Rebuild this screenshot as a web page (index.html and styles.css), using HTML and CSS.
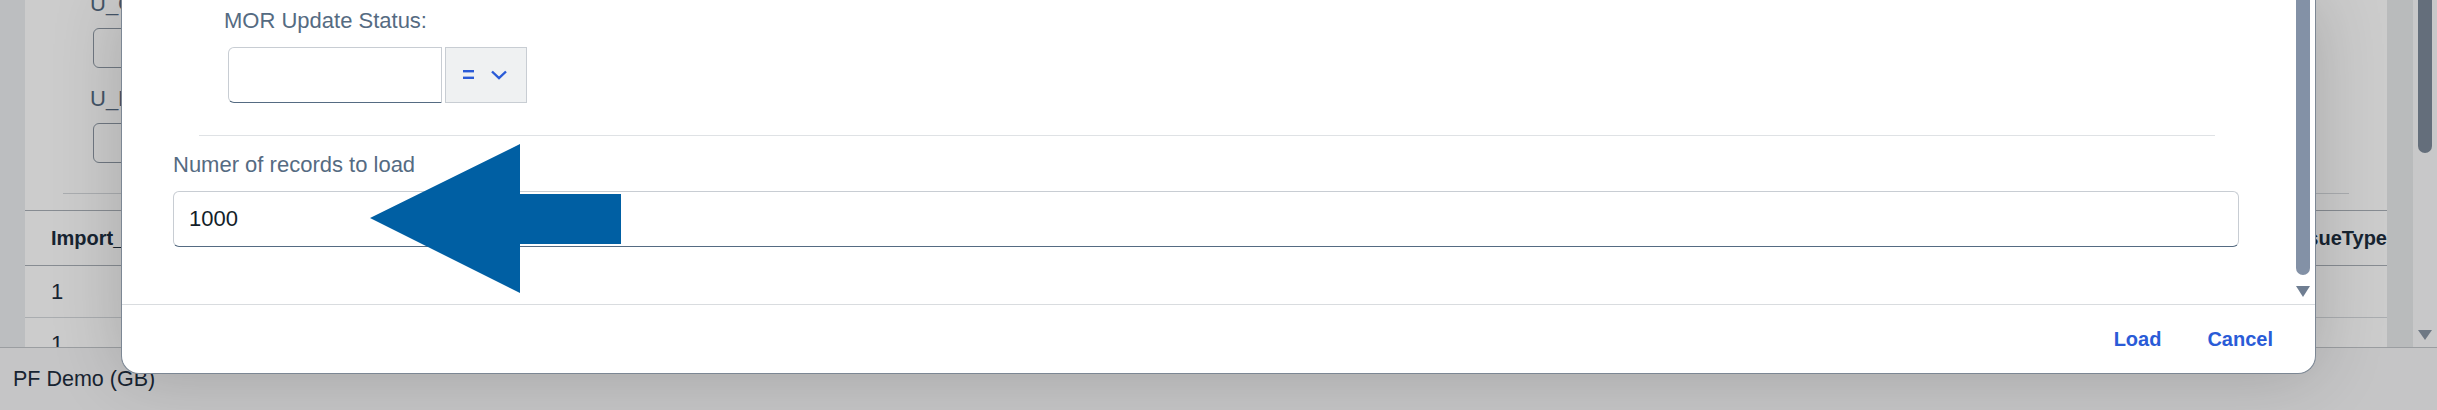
FILE: index.html
```html
<!DOCTYPE html>
<html lang="en">
<head>
    <meta charset="UTF-8">
    <meta name="viewport" content="width=device-width, initial-scale=1.0">
    <title>Load records</title>
    <link rel="stylesheet" href="styles.css">
</head>
<body>

<div class="app">
    <div class="shell">
        <div class="side"></div>
        <div class="panel">
            <div class="filters">
                <p class="flabel">U_CostCenter:</p>
                <div class="fstub"></div>
                <p class="flabel">U_Entity:</p>
                <div class="fstub last"></div>
            </div>
            <div class="fsep"></div>
            <div class="grid-head">
                <span>Import_ID</span>
                <span>IssueType</span>
            </div>
            <div class="grid-row">1</div>
            <div class="grid-row">1</div>
        </div>
        <div class="side side-r"></div>
        <div class="page-scroll">
            <div class="thumb"></div>
            <div class="down"></div>
        </div>
    </div>
    <div class="status">PF Demo (GB)</div>
</div>

<div class="block-layer"></div>

<div class="dialog">
    <div class="dlg-body">
        <div class="dlg-content">
            <div class="mor">
                <p class="label">MOR Update Status:</p>
                <div class="mor-row">
                    <input type="text" class="mor-input">
                    <button class="op-btn">
                        <svg width="44" height="10" viewBox="0 0 44 10">
                            <rect x="0" y="0" width="11" height="2.4" fill="#2a5bd7"/>
                            <rect x="0" y="6.6" width="11" height="2.4" fill="#2a5bd7"/>
                            <path d="M29 1.5 L36 8.2 L43 1.5" fill="none" stroke="#2a5bd7" stroke-width="2.4"/>
                        </svg>
                    </button>
                </div>
            </div>
            <div class="sep"></div>
            <p class="label label-count">Numer of records to load</p>
            <input type="text" class="count" value="1000">
        </div>
        <div class="dlg-bar">
            <div class="bar-thumb"></div>
            <div class="bar-down"></div>
        </div>
    </div>
    <div class="dlg-footer">
        <button class="link-btn">Load</button>
        <button class="link-btn">Cancel</button>
    </div>
</div>

<svg class="pointer" width="252" height="150" viewBox="0 0 252 150">
    <polygon points="0,74 150,0 150,50 251,50 251,100 150,100 150,149" fill="#005fa3"/>
</svg>

</body>
</html>
```

FILE: styles.css
```css
body {
    font-family: "Liberation Sans", Arial, sans-serif;
    margin: 0;
    padding: 0;
    width: 2437px;
    height: 410px;
    overflow: hidden;
    position: relative;
    background-color: #f4f5f6;
}

/* page behind the dialog */

.app {
    height: 410px;
    display: flex;
    flex-direction: column;
}

.shell {
    height: 347px;
    display: flex;
    overflow: hidden;
    background-color: #eceef0;
}

.side {
    width: 25px;
}

.side-r {
    width: 26px;
    background-color: #e8eaec;
}

.panel {
    flex: 1;
    background-color: #fff;
    overflow: hidden;
}

.filters {
    margin-top: -9px;
    padding-left: 65px;
}

.flabel {
    margin: 0;
    font-size: 22px;
    line-height: 26px;
    color: #556b82;
}

.fstub {
    width: 200px;
    height: 40px;
    margin: 11px 0 18px 3px;
    border: 1px solid #8c97a3;
    border-radius: 6px;
    box-sizing: border-box;
}

.fstub.last {
    margin-bottom: 30px;
}

.fsep {
    height: 1px;
    margin: 0 38px;
    background-color: #d5d9dd;
}

.grid-head {
    height: 56px;
    margin-top: 16px;
    box-sizing: border-box;
    border-top: 1px solid #a9b0b7;
    border-bottom: 1px solid #a9b0b7;
    display: flex;
    align-items: center;
    justify-content: space-between;
    padding-left: 26px;
    font-size: 20px;
    line-height: 26px;
    font-weight: bold;
    color: #1d2d3e;
}

.grid-row {
    height: 52px;
    box-sizing: border-box;
    border-bottom: 1px solid #d5d9dd;
    display: flex;
    align-items: center;
    padding-left: 26px;
    font-size: 22px;
    line-height: 26px;
    color: #1d2d3e;
}

.page-scroll {
    width: 24px;
    background-color: #fbfbfc;
    display: flex;
    flex-direction: column;
    align-items: center;
}

.thumb {
    width: 14px;
    height: 153px;
    background-color: #7e8a9a;
    border-radius: 0 0 7px 7px;
}

.down {
    width: 0;
    height: 0;
    margin-top: auto;
    margin-bottom: 7px;
    border-left: 7px solid transparent;
    border-right: 7px solid transparent;
    border-top: 10px solid #8a96a6;
}

.status {
    flex: 1;
    border-top: 1px solid #c2c6ca;
    background-color: #f7f7f8;
    display: flex;
    align-items: center;
    padding-left: 13px;
    font-size: 21.5px;
    color: #1d2d3e;
}

.block-layer {
    position: absolute;
    top: 0;
    left: 0;
    right: 0;
    bottom: 0;
    background-color: rgba(0, 0, 0, 0.2);
}

/* dialog */

.dialog {
    position: absolute;
    left: 121px;
    top: 0;
    width: 2195px;
    height: 374px;
    box-sizing: border-box;
    background-color: #fff;
    border: 1px solid #7c8794;
    border-top: none;
    border-radius: 0 0 18px 18px;
    box-shadow: 0 0 70px rgba(0, 0, 0, 0.18);
    display: flex;
    flex-direction: column;
    overflow: hidden;
}

.dlg-body {
    height: 304px;
    display: flex;
}

.dlg-content {
    flex: 1;
    padding: 8px 57px 0 51px;
}

.label {
    margin: 0;
    font-size: 22px;
    line-height: 26px;
    color: #556b82;
}

.mor {
    padding-left: 51px;
}

.mor-row {
    display: flex;
    gap: 3px;
    margin: 13px 0 0 4px;
}

.mor-input {
    width: 214px;
    height: 56px;
    box-sizing: border-box;
    border: 1px solid #c8cdd3;
    border-bottom-color: #556b82;
    border-radius: 6px 0 0 6px;
    outline: none;
}

.op-btn {
    width: 82px;
    height: 56px;
    padding: 0;
    background-color: #eff1f2;
    border: 1px solid #c8cdd3;
    border-radius: 0;
    display: flex;
    align-items: center;
    justify-content: center;
}

.op-btn svg {
    display: block;
    margin-left: -2px;
}

.sep {
    height: 1px;
    margin: 32px 24px 0 26px;
    background-color: #dfe2e5;
}

.label-count {
    margin-top: 16px;
}

.count {
    display: block;
    width: 100%;
    height: 56px;
    margin-top: 13px;
    box-sizing: border-box;
    padding: 0 15px;
    border: 1px solid #c8cdd3;
    border-bottom-color: #556b82;
    border-radius: 6px;
    font-family: "Liberation Sans", Arial, sans-serif;
    font-size: 22px;
    color: #131e29;
    outline: none;
}

.dlg-bar {
    width: 14px;
    margin-right: 5px;
    display: flex;
    flex-direction: column;
    align-items: center;
}

.bar-thumb {
    width: 14px;
    height: 275px;
    background-color: #8391a6;
    border-radius: 0 0 7px 7px;
}

.bar-down {
    width: 0;
    height: 0;
    margin-top: 11px;
    border-left: 7px solid transparent;
    border-right: 7px solid transparent;
    border-top: 11px solid #6f7e92;
}

.dlg-footer {
    flex: 1;
    border-top: 1px solid #d9dcdf;
    display: flex;
    justify-content: flex-end;
    align-items: center;
    gap: 46px;
    padding-right: 42px;
}

.link-btn {
    padding: 0;
    background: none;
    border: none;
    font-family: "Liberation Sans", Arial, sans-serif;
    font-size: 20px;
    font-weight: bold;
    color: #2a5bd7;
    cursor: pointer;
}

.pointer {
    position: absolute;
    left: 370px;
    top: 144px;
}
```
